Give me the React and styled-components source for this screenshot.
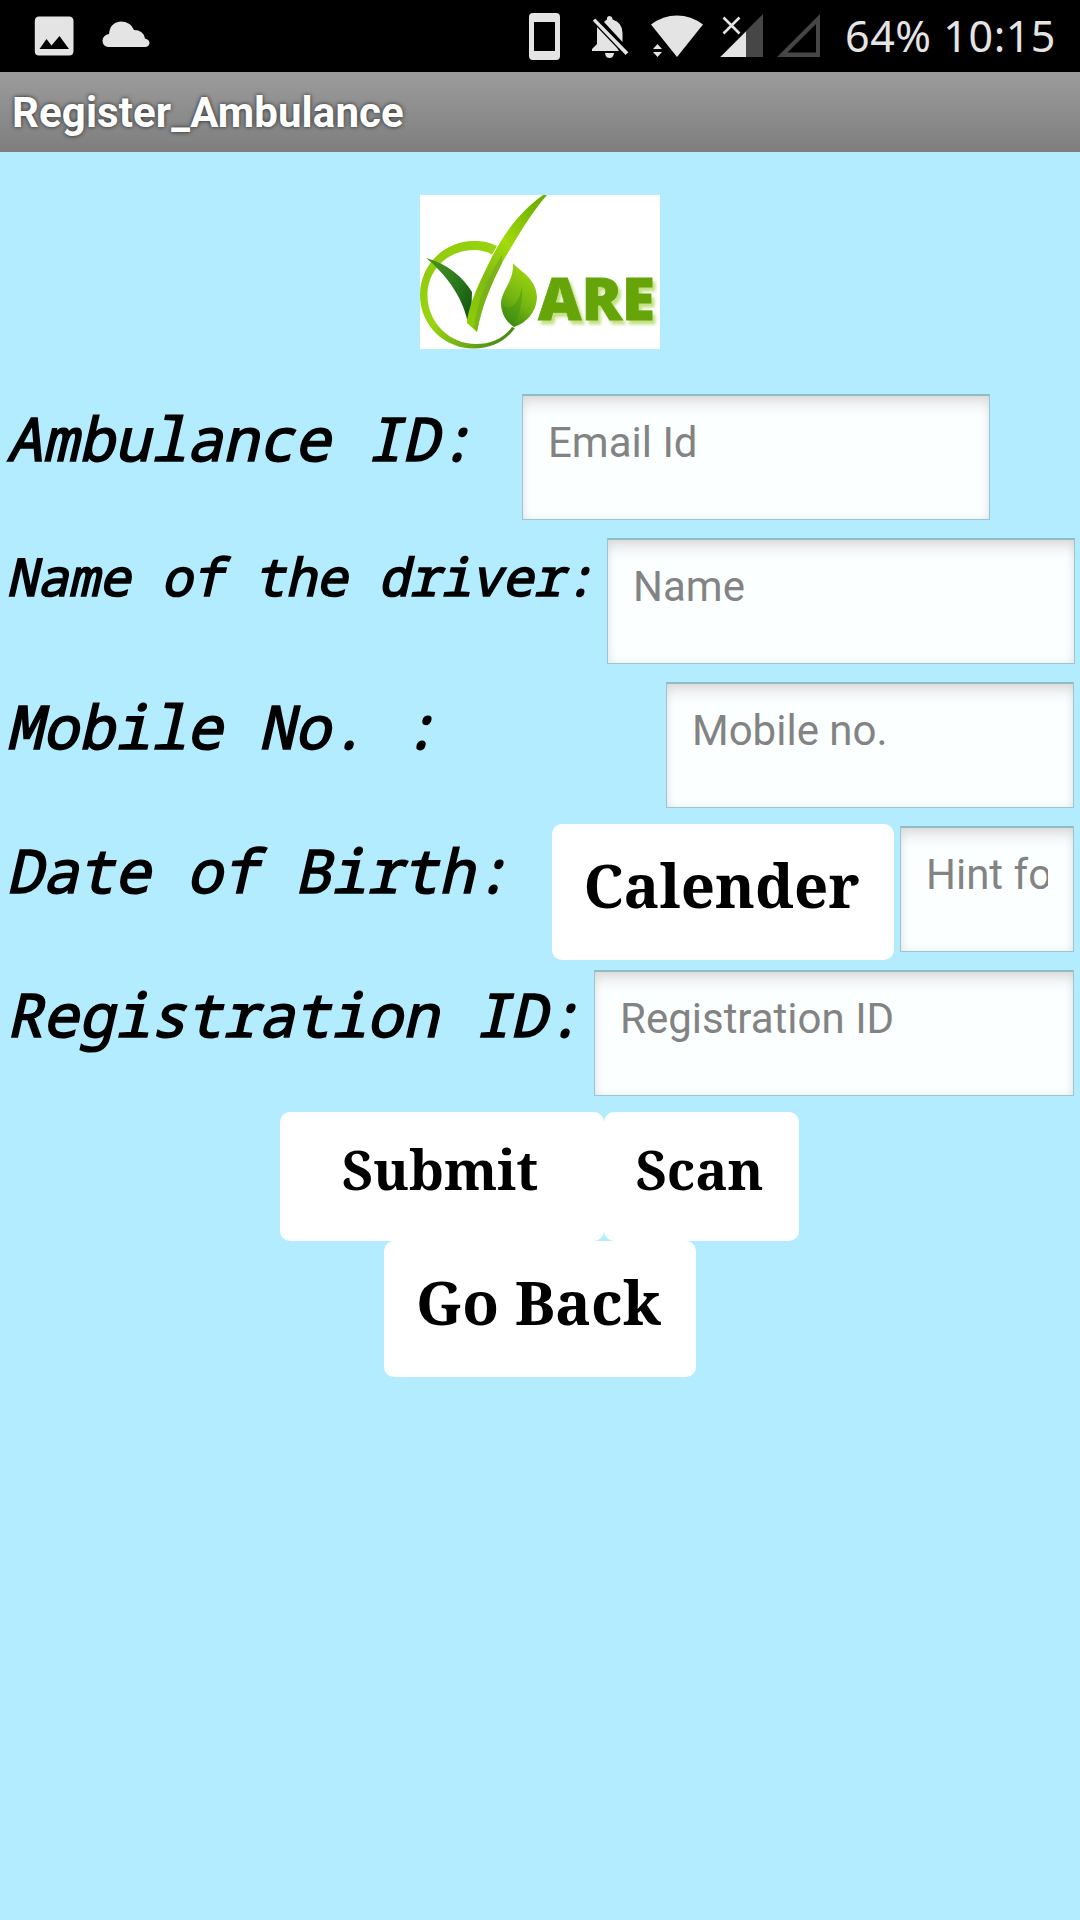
import React from "react";
import styled, { createGlobalStyle } from "styled-components";

const GlobalStyle = createGlobalStyle`
  * { box-sizing: border-box; }
  body { margin: 0; background: #b3ecff; }
`;

const Screen = styled.div`
  width: 1080px;
  height: 1920px;
  background: #b3ecff;
  overflow: hidden;
  display: flex;
  flex-direction: column;
`;

const StatusBar = styled.header`
  height: 72px;
  flex: none;
  background: #000;
  display: flex;
  justify-content: space-between;
  padding: 0 24px 0 34px;
`;

const StatusGroup = styled.div`
  display: flex;
  align-items: center;
`;

const Glyph = styled.svg`
  display: block;
  flex: none;
  fill: #e4e4e4;
  margin-left: ${(p) => p.$gap || 0}px;
`;

const StatusText = styled.span`
  font: 400 43px/72px "Noto Sans", sans-serif;
  letter-spacing: 0.55px;
  color: #e4e4e4;
  white-space: pre;
  margin-left: 25px;
  height: 72px;
`;

const TitleBar = styled.h1`
  margin: 0;
  height: 80px;
  flex: none;
  padding: 1px 0 0 12px;
  background: linear-gradient(#9c9c9c, #7e7e7e);
  color: #fff;
  font: 700 42px/80px Roboto, sans-serif;
  letter-spacing: 0.1px;
  text-shadow: 0 0 4px rgba(0, 0, 0, 0.75);
`;

const LogoSlot = styled.div`
  display: flex;
  justify-content: center;
  padding: 43px 0 39px;
`;

const LogoArt = styled.svg`
  display: block;
  background: #fff;
`;

const LogoText = styled.text`
  font: 800 58px "Open Sans", sans-serif;
  fill: #66a50a;
  stroke: #66a50a;
  stroke-width: 0.8px;
  filter: drop-shadow(3px 4px 1.5px #c3e084);
`;

const Row = styled.div`
  height: 144px;
  display: flex;
  align-items: flex-start;
  padding: 6px 6px 0 6px;
`;

const Label = styled.label`
  flex: 1;
  height: 100px;
  font: 400 ${(p) => p.$size || 60}px/70px "Noto Sans Mono", "DejaVu Sans Mono", monospace;
  letter-spacing: ${(p) => p.$spacing || "0"};
  padding-top: ${(p) => p.$top || 9}px;
  color: #000;
  white-space: pre;
  -webkit-text-stroke: 1.7px #000;
  transform: skewX(-13deg);
  transform-origin: 0 ${(p) => p.$baseline || 68}px;
`;

const Field = styled.div`
  width: ${(p) => p.$width}px;
  height: 126px;
  flex: none;
  margin-right: ${(p) => p.$after || 0}px;
  padding: 22px 25px 0;
  background: #fbffff;
  border: 1px solid #9ac6d3;
  border-top: 2px solid #93bac7;
  box-shadow: inset 0 12px 14px -5px rgba(80, 60, 60, 0.15),
    inset 0 0 9px rgba(80, 60, 60, 0.1);
`;

const Hint = styled.span`
  display: block;
  overflow: hidden;
  white-space: nowrap;
  font: 400 42px/50px Roboto, sans-serif;
  color: #838383;
`;

const Button = styled.button`
  width: ${(p) => p.$width}px;
  height: ${(p) => p.$height}px;
  flex: none;
  display: flex;
  justify-content: center;
  align-items: flex-start;
  margin: ${(p) => p.$margin || "0"};
  padding: ${(p) => p.$top}px 3px 0 0;
  border: 0;
  border-radius: 10px;
  background: #fff;
  color: #000;
  font: 700 ${(p) => p.$size}px/70px "Noto Serif", "DejaVu Serif Condensed", "DejaVu Serif", serif;
  white-space: nowrap;
`;

const Actions = styled.div`
  display: flex;
  justify-content: center;
  padding: ${(p) => p.$top || 0}px ${(p) => p.$right || 0}px 0 0;
`;

function Logo() {
  return (
    <LogoArt width="240" height="154" viewBox="0 0 240 154">
      <defs>
        <linearGradient id="ring" x1="0" y1="0" x2="1" y2="1">
          <stop offset="0" stopColor="#8cc70c" />
          <stop offset="0.45" stopColor="#9bd510" />
          <stop offset="0.75" stopColor="#6aa814" />
          <stop offset="1" stopColor="#2f7a12" />
        </linearGradient>
        <linearGradient id="blade" x1="0.8" y1="0" x2="0.2" y2="1">
          <stop offset="0" stopColor="#6fb000" />
          <stop offset="0.4" stopColor="#a2da0c" />
          <stop offset="0.7" stopColor="#7fbb10" />
          <stop offset="1" stopColor="#8ccb08" />
        </linearGradient>
        <linearGradient id="dark" x1="0" y1="0" x2="1" y2="1">
          <stop offset="0" stopColor="#4d9420" />
          <stop offset="0.5" stopColor="#2c7a1c" />
          <stop offset="1" stopColor="#0f4f10" />
        </linearGradient>
        <linearGradient id="leaf" x1="0.7" y1="0" x2="0.3" y2="1">
          <stop offset="0" stopColor="#a3d80e" />
          <stop offset="0.6" stopColor="#74b512" />
          <stop offset="1" stopColor="#3d8a12" />
        </linearGradient>
      </defs>
      <path
        d="M77 51 C69 47 62 46 54 46 C24 46 0 70 0 100 C0 130 24 153.500 54 153.500 C71 153.500 86 146 95 133 L92 132 C83 144 71 149 56 149 C30 149 7.500 128 7.500 100 C7.500 75 28 55 54 55 C61 55 67 56.500 72 59.500Z"
        fill="url(#ring)"
      />
      <path d="M6 63 C28 69 43 82 52 97 L51 128 L47 124 C42 102 26 79 6 63Z" fill="url(#dark)" />
      <path
        d="M127 0 C109 21 96 44 82 68 C71 90 62 110 57 137 L47 128 C48 112 59 88 68 70 C81 42 99 17 123 0Z"
        fill="url(#blade)"
      />
      <path d="M82 60 C66 85 57 107 54 133 L57 137 C62 110 71 90 82 68Z" fill="#75ad1c" opacity="0.7" />
      <path d="M93 68 C99 76 117 83 117 103 C116 118 106 128 94 132 C86 127 81 118 81 107 C83 93 94 86 93 68Z" fill="url(#leaf)" />
      <path d="M102 92 C103 108 99 120 94 132 C86 127 81 118 81 108 C87 118 98 112 102 92Z" fill="#3c8f12" opacity="0.4" />
      <LogoText x="118" y="125" textLength="117" lengthAdjust="spacingAndGlyphs">ARE</LogoText>
    </LogoArt>
  );
}

function StatusIcons() {
  return (
    <>
      <Glyph width="33" height="72" viewBox="529 0 33 72">
        <path fillRule="evenodd" d="M533 13H556Q560 13 560 17V56Q560 60 556 60H533Q529 60 529 56V17Q529 13 533 13ZM534 22V51H555V22Z" />
      </Glyph>
      <Glyph $gap={30} width="37" height="72" viewBox="592 0 37 72">
        <path d="M597 27L617 48 619 51H592V49L597 44Z" />
        <path d="M604 22Q605 20.500 607 19.500V18.500Q607 16 609.500 16T612.500 18.500V19.500Q622.500 22.500 622.500 33V42Z" />
        <path d="M605 53H614Q613.500 58 609.500 58T605 53Z" />
        <path d="M592.800 20.800L595.200 18.400 628.300 52.300 625.600 55Z" />
      </Glyph>
      <Glyph $gap={22} width="53" height="72" viewBox="651 0 53 72">
        <path d="M651 24.500Q663 15.500 677 15.500T703 24.500L677 57Z" />
        <path d="M653 49L657.500 44 662 49ZM653 52H662L657.500 57Z" />
      </Glyph>
      <Glyph $gap={16} width="43" height="72" viewBox="720 0 43 72">
        <path d="M763 14V57H720Z" fill="#464646" />
        <path d="M746 31.500V57H720.500Z" />
        <path d="M723.500 17.500L739.500 33.500M739.500 17.500L723.500 33.500" stroke="#e4e4e4" strokeWidth="2.600" />
      </Glyph>
      <Glyph $gap={14} width="43" height="72" viewBox="777 0 43 72">
        <path d="M820 14V57H777ZM816 24L787.500 52.500H816Z" fill="#464646" fillRule="evenodd" />
      </Glyph>
    </>
  );
}

export default function App() {
  return (
    <Screen>
      <GlobalStyle />
      <StatusBar>
        <StatusGroup>
          <Glyph width="40" height="72" viewBox="34 0 40 72">
            <path fillRule="evenodd" d="M39 16.500H69Q73.500 16.500 73.500 21V51Q73.500 55.500 69 55.500H39Q34.800 55.500 34.800 51V21Q34.800 16.500 39 16.500ZM39.500 49H69L59.500 36 51.500 45.500 46.500 39Z" />
          </Glyph>
          <Glyph $gap={28} width="48" height="72" viewBox="102 0 48 72">
            <path d="M108 47Q102.500 46 102.500 40.500 103 35 109 34 110 22 121.500 21.500 131 22 134 30 143.500 30 145 38.500 149.500 39.500 149.500 43 149 47 145 47Z" />
          </Glyph>
        </StatusGroup>
        <StatusGroup>
          <StatusIcons />
          <StatusText>64% 10:15</StatusText>
        </StatusGroup>
      </StatusBar>
      <TitleBar>Register_Ambulance</TitleBar>
      <LogoSlot>
        <Logo />
      </LogoSlot>
      <Row>
        <Label>Ambulance ID:</Label>
        <Field $width={468} $after={84}><Hint>Email Id</Hint></Field>
      </Row>
      <Row>
        <Label $size={52} $spacing="-0.2px" $top={3} $baseline={58}>Name of the driver:</Label>
        <Field $width={468} $after={-1}><Hint>Name</Hint></Field>
      </Row>
      <Row>
        <Label>Mobile No. :</Label>
        <Field $width={408}><Hint>Mobile no.</Hint></Field>
      </Row>
      <Row>
        <Label>Date of Birth:</Label>
        <Button $width={342} $height={136} $size={60} $top={26} $margin="-2px 6px 0 0">Calender</Button>
        <Field $width={174}><Hint>Hint fo</Hint></Field>
      </Row>
      <Row>
        <Label>Registration ID:</Label>
        <Field $width={480}><Hint>Registration ID</Hint></Field>
      </Row>
      <Actions $top={4} $right={2}>
        <Button $width={324} $height={129} $size={54} $top={22}>Submit</Button>
        <Button $width={195} $height={129} $size={54} $top={22}>Scan</Button>
      </Actions>
      <Actions>
        <Button $width={312} $height={136} $size={60} $top={26}>Go Back</Button>
      </Actions>
    </Screen>
  );
}
